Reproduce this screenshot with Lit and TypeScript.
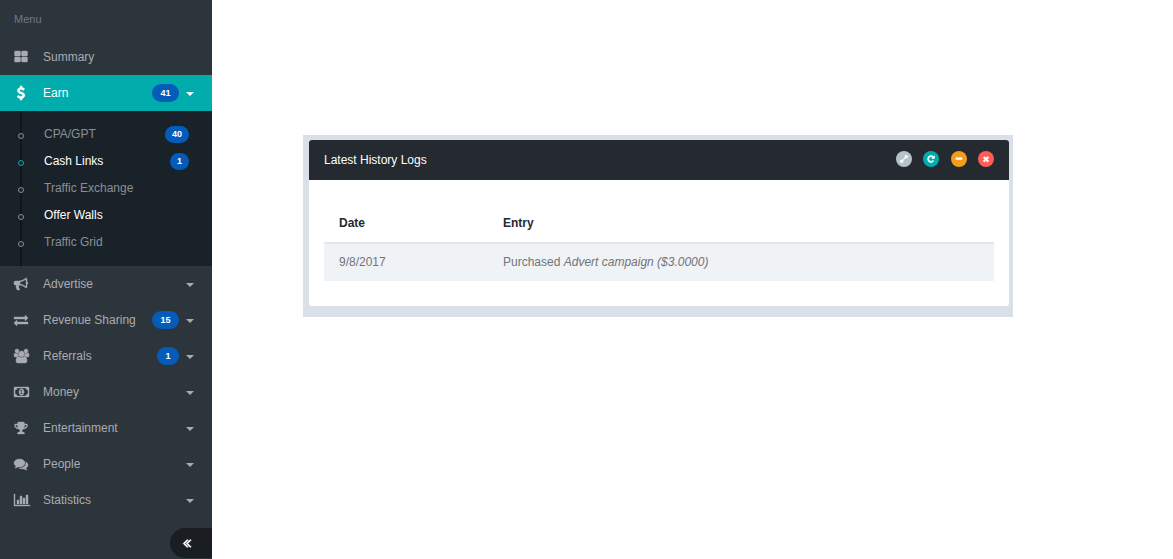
import { LitElement, html, css, svg, nothing } from "lit";
import { customElement, property, state } from "lit/decorators.js";
import { classMap } from "lit/directives/class-map.js";

interface Glyph {
  width: number;
  path: string;
}

const GLYPHS: Record<string, Glyph> = {
  grid: {
    width: 1792,
    path: "M832 1024v384q0 52-38 90t-90 38h-512q-52 0-90-38t-38-90v-384q0-52 38-90t90-38h512q52 0 90 38t38 90zm0-768v384q0 52-38 90t-90 38h-512q-52 0-90-38t-38-90v-384q0-52 38-90t90-38h512q52 0 90 38t38 90zm896 768v384q0 52-38 90t-90 38h-512q-52 0-90-38t-38-90v-384q0-52 38-90t90-38h512q52 0 90 38t38 90zm0-768v384q0 52-38 90t-90 38h-512q-52 0-90-38t-38-90v-384q0-52 38-90t90-38h512q52 0 90 38t38 90z",
  },
  dollar: {
    width: 1792,
    path: "M1362 1185q0 153-99.500 263.500t-258.500 136.500v175q0 14-9 23t-23 9h-135q-13 0-22.500-9.500t-9.500-22.500v-175q-66-9-127.500-31t-101.500-44.500-74-48-46.500-37.500-17.500-18q-17-21-2-41l103-135q7-10 23-12 15-2 24 9l2 2q113 99 243 125 37 8 74 8 81 0 142.500-43t61.500-122q0-28-15-53t-33.500-42-58.500-37.500-66-32-80-32.500q-39-16-61.500-25t-61.500-26.500-62.500-31-56.500-35.500-53.500-42.500-43.500-49-35.500-58-21-66.500-8.500-78q0-138 98-242t255-134v-180q0-13 9.500-22.500t22.500-9.500h135q14 0 23 9t9 23v176q57 6 110.500 23t87 33.500 63.500 37.500 39 29 15 14q17 18 5 38l-81 146q-8 15-23 16-14 3-27-7-3-3-14.500-12t-39-26.500-58.500-32-74.500-26-85.500-11.500q-95 0-155 43t-60 111q0 26 8.500 48t29.500 41.500 39.500 33 56 31 60.500 27 70 27.500q53 20 81 31.500t76 35 75.500 42.500 62 50 53 63.500 31.500 76.500 13 94z",
  },
  bullhorn: {
    width: 1792,
    path: "M1664 640q53 0 90.500 37.500t37.500 90.500-37.500 90.500-90.500 37.500v384q0 52-38 90t-90 38q-417-347-812-380-58 19-91 66t-31 100.500 40 92.500q-20 33-23 65.500t6 58 33.500 55 48 50 61.500 50.500q-29 58-111.500 83t-168.500 11.500-132-55.500q-7-23-29.500-87.500t-32-94.500-23-89-15-101 3.500-98.500 22-110.500h-122q-66 0-113-47t-47-113v-192q0-66 47-113t113-47h480q435 0 896-384 52 0 90 38t38 90v384zm-128 604v-954q-394 302-768 343v270q377 42 768 341z",
  },
  exchange: {
    width: 1792,
    path: "M1792 1184v192q0 13-9.500 22.500t-22.500 9.500h-1376v192q0 13-9.500 22.500t-22.500 9.500q-12 0-24-10l-319-320q-9-9-9-22 0-14 9-23l320-320q9-9 23-9 13 0 22.500 9.500t9.500 22.500v192h1376q13 0 22.500 9.500t9.500 22.500zm0-544q0 14-9 23l-320 320q-9 9-23 9-13 0-22.500-9.500t-9.500-22.500v-192h-1376q-13 0-22.500-9.500t-9.500-22.500v-192q0-13 9.500-22.500t22.500-9.500h1376v-192q0-14 9-23t23-9q12 0 24 10l319 319q9 9 9 23z",
  },
  users: {
    width: 1920,
    path: "M593 896q-162 5-265 128h-134q-82 0-138-40.500t-56-118.500q0-353 124-353 6 0 43.500 21t97.500 42.500 119 21.500q67 0 133-23-5 37-5 66 0 159 93 290zm1071 637q0 120-73 189.500t-194 69.500h-874q-121 0-194-69.500t-73-189.500q0-53 3.500-103.500t14-109 26.500-108.500 43-97.500 62-81 85.500-53.500 111.500-20q10 0 43 21.500t73 48 107 48 135 21.500 135-21.500 107-48 73-48 43-21.500q61 0 111.500 20t85.500 53.500 62 81 43 97.500 26.500 108.500 14 109 3.500 103.500zm-1024-1277q0 106-75 181t-181 75-181-75-75-181 75-181 181-75 181 75 75 181zm704 384q0 159-112.500 271.500t-271.500 112.500-271.500-112.500-112.500-271.500 112.500-271.500 271.500-112.500 271.500 112.500 112.500 271.500zm576 225q0 78-56 118.500t-138 40.500h-134q-103-123-265-128 93-131 93-290 0-29-5-66 66 23 133 23 59 0 119-21.500t97.500-42.500 43.500-21q124 0 124 353zm-128-609q0 106-75 181t-181 75-181-75-75-181 75-181 181-75 181 75 75 181z",
  },
  money: {
    width: 1920,
    path: "M768 1152h384v-96h-128v-448h-114l-148 137 77 80q42-37 55-57h2v288h-128v96zm512-256q0 70-21 142t-59.500 134-101.500 101-138 39-138-39-101.500-101-59.500-134-21-142 21-142 59.500-134 101.500-101 138-39 138 39 101.500 101 59.500 134 21 142zm512 256v-512q-106 0-181-75t-75-181h-1152q0 106-75 181t-181 75v512q106 0 181 75t75 181h1152q0-106 75-181t181-75zm128-832v1152q0 26-19 45t-45 19h-1792q-26 0-45-19t-19-45v-1152q0-26 19-45t45-19h1792q26 0 45 19t19 45z",
  },
  trophy: {
    width: 1792,
    path: "M522 883q-74-162-74-371h-256v96q0 78 94.500 162t235.500 113zm1078-275v-96h-256q0 209-74 371 141-29 235.500-113t94.500-162zm128-128v128q0 71-41.500 143t-112 130-173 97.500-215.500 44.500q-42 54-95 95-38 34-52.500 72.500t-14.500 89.500q0 54 30.500 91t97.500 37q75 0 133.500 45.500t58.500 114.500v64q0 14-9 23t-23 9h-832q-14 0-23-9t-9-23v-64q0-69 58.500-114.500t133.500-45.500q67 0 97.500-37t30.500-91q0-51-14.500-89.500t-52.500-72.500q-53-41-95-95-113-5-215.500-44.500t-173-97.500-112-130-41.500-143v-128q0-40 28-68t68-28h288v-96q0-66 47-113t113-47h576q66 0 113 47t47 113v96h288q40 0 68 28t28 68z",
  },
  comments: {
    width: 1792,
    path: "M1408 768q0 139-94 257t-256.500 186.500-353.500 68.500q-86 0-176-16-124 88-278 128-36 9-86 16h-3q-11 0-20.500-8t-11.500-21q-1-3-1-6.500t.5-6.500 2-6l2.500-5 3.500-5.500 4-5 4.500-5 4-4.500q5-6 23-25t26-29.500 22.500-29 25-38.500 20.500-44q-124-72-195-177t-71-224q0-139 94-257t256.500-186.500 353.500-68.500 353.500 68.500 256.500 186.500 94 257zm384 256q0 120-71 224.500t-195 176.500q10 24 20.500 44t25 38.500 22.500 29 26 29.500 23 25q1 1 4 4.500t4.500 5 4 5 3.500 5.500l2.500 5 2 6 .5 6.500-1 6.500q-3 14-13 22t-22 7q-50-7-86-16-154-40-278-128-90 16-176 16-271 0-472-132 58 4 88 4 161 0 309-45t264-129q125-92 192-212t67-254q0-77-23-152 129 71 204 178t75 230z",
  },
  chart: {
    width: 2048,
    path: "M640 896v512h-256v-512h256zm384-512v1024h-256v-1024h256zm1024 1152v128h-2048v-1536h128v1408h1920zm-640-896v768h-256v-768h256zm384-384v1152h-256v-1152h256z",
  },
  collapse: {
    width: 1792,
    path: "M1011 1376q0 13-10 23l-50 50q-10 10-23 10t-23-10l-466-466q-10-10-10-23t10-23l466-466q10-10 23-10t23 10l50 50q10 10 10 23t-10 23l-393 393 393 393q10 10 10 23zm384 0q0 13-10 23l-50 50q-10 10-23 10t-23-10l-466-466q-10-10-10-23t10-23l466-466q10-10 23-10t23 10l50 50q10 10 10 23t-10 23l-393 393 393 393q10 10 10 23z",
  },
  expand: {
    width: 1792,
    path: "M883 1056q0 13-10 23l-332 332 144 144q19 19 19 45t-19 45-45 19h-448q-26 0-45-19t-19-45v-448q0-26 19-45t45-19 45 19l144 144 332-332q10-10 23-10t23 10l114 114q10 10 10 23zm781-864v448q0 26-19 45t-45 19-45-19l-144-144-332 332q-10 10-23 10t-23-10l-114-114q-10-10-10-23t10-23l332-332-144-144q-19-19-19-45t19-45 45-19h448q26 0 45 19t19 45z",
  },
  repeat: {
    width: 1792,
    path: "M1664 256v448q0 26-19 45t-45 19h-448q-42 0-59-40-17-39 14-69l138-138q-148-137-349-137-104 0-198.500 40.500t-163.500 109.500-109.500 163.500-40.500 198.500 40.500 198.500 109.500 163.500 163.500 109.500 198.500 40.500q119 0 225-52t179-147q7-10 23-12 15 0 25 9l137 138q9 8 9.500 20.500t-7.500 22.500q-109 132-264 204.500t-327 72.500q-156 0-298-61t-245-164-164-245-61-298 61-298 164-245 245-164 298-61q147 0 284.500 55.500t244.500 156.500l130-129q29-31 70-14 39 17 39 59z",
  },
  minus: {
    width: 1792,
    path: "M1600 736v192q0 40-28 68t-68 28h-1216q-40 0-68-28t-28-68v-192q0-40 28-68t68-28h1216q40 0 68 28t28 68z",
  },
  times: {
    width: 1792,
    path: "M1490 1322q0 40-28 68l-136 136q-28 28-68 28t-68-28l-294-294-294 294q-28 28-68 28t-68-28l-136-136q-28-28-28-68t28-68l294-294-294-294q-28-28-28-68t28-68l136-136q28-28 68-28t68 28l294 294 294-294q28-28 68-28t68 28l136 136q28 28 28 68t-28 68l-294 294 294 294q28 28 28 68z",
  },
};

const glyph = (name: string) => {
  const g = GLYPHS[name];
  return html`<svg class="glyph" viewBox="0 0 ${g.width} 1792" aria-hidden="true">
    ${svg`<path d=${g.path}></path>`}
  </svg>`;
};

interface SubItem {
  label: string;
  badge?: number;
  strong?: boolean;
  current?: boolean;
}

interface MenuItem {
  label: string;
  icon: string;
  badge?: number;
  leaf?: boolean;
  children?: SubItem[];
}

const MENU: MenuItem[] = [
  { label: "Summary", icon: "grid", leaf: true },
  {
    label: "Earn",
    icon: "dollar",
    badge: 41,
    children: [
      { label: "CPA/GPT", badge: 40 },
      { label: "Cash Links", badge: 1, strong: true, current: true },
      { label: "Traffic Exchange" },
      { label: "Offer Walls", strong: true },
      { label: "Traffic Grid" },
    ],
  },
  { label: "Advertise", icon: "bullhorn" },
  { label: "Revenue Sharing", icon: "exchange", badge: 15 },
  { label: "Referrals", icon: "users", badge: 1 },
  { label: "Money", icon: "money" },
  { label: "Entertainment", icon: "trophy" },
  { label: "People", icon: "comments" },
  { label: "Statistics", icon: "chart" },
];

@customElement("side-menu")
export class SideMenu extends LitElement {
  @state() private open = "Earn";

  static styles = css`
    :host {
      display: flex;
      flex-direction: column;
      background: #2d353c;
      color: #a8acb1;
      font: 12px/16px "Liberation Sans", Arial, sans-serif;
    }
    ul {
      list-style: none;
      margin: 0;
      padding: 0;
    }
    a {
      color: inherit;
      text-decoration: none;
    }
    .heading {
      margin: 0;
      padding: 12px 14px;
      font-size: 11px;
      line-height: 15px;
      font-weight: 400;
      color: #6e7a84;
    }
    .item {
      display: flex;
      align-items: center;
      height: 36px;
      padding: 0 18px 0 14px;
    }
    .item.active {
      background: #00acac;
      color: #fff;
    }
    .icon {
      display: flex;
      width: 16px;
      height: 14px;
      margin-right: 13px;
    }
    .glyph {
      display: block;
      height: 100%;
      overflow: visible;
      fill: currentColor;
      stroke: currentColor;
      stroke-width: 50;
    }
    .active .glyph {
      stroke-width: 110;
    }
    .label {
      flex: 1;
      white-space: nowrap;
    }
    .badge {
      min-width: 11px;
      padding: 0 8px;
      border-radius: 9px;
      background: #045cb8;
      color: #fff;
      font-size: 9px;
      line-height: 18px;
      font-weight: 700;
      text-align: center;
    }
    .badge.short {
      min-width: 6px;
    }
    .caret {
      margin: 2px 0 0 7px;
      border: 4px solid transparent;
      border-top-color: currentColor;
      border-bottom: 0;
    }
    .sub {
      padding: 10px 0;
      background: linear-gradient(#10171c, #10171c) 20px 0 / 2px 100% no-repeat
        #1a2229;
      color: #889097;
    }
    .subitem {
      display: flex;
      align-items: center;
      height: 27px;
      padding: 0 23px 0 18px;
    }
    .subitem .label {
      padding-bottom: 2px;
    }
    .dot {
      box-sizing: border-box;
      width: 6px;
      height: 6px;
      margin: 2px 20px 0 0;
      border: 1px solid #889097;
      border-radius: 50%;
      background: #1a2229;
    }
    .subitem.current .dot {
      border-color: #00acac;
    }
    .subitem.strong {
      color: #fff;
    }
    .subitem .badge {
      min-width: 10px;
      padding: 0 7px;
      line-height: 17px;
    }
    .subitem .badge.short {
      min-width: 5px;
    }
    .collapse {
      align-self: flex-end;
      width: 42px;
      height: 30px;
      margin-top: 10px;
      padding: 8px 0 8px 10px;
      border: 0;
      border-radius: 15px 0 0 15px;
      background: #1a1d21;
      color: #fff;
    }
    .collapse .glyph {
      height: 14px;
      stroke-width: 110;
    }
  `;

  private toggle(e: Event, item: MenuItem) {
    e.preventDefault();
    this.open = this.open === item.label ? "" : item.label;
  }

  private badge(count?: number) {
    return count
      ? html`<span class=${classMap({ badge: true, short: count < 10 })}>${count}</span>`
      : nothing;
  }

  render() {
    return html`
      <h2 class="heading">Menu</h2>
      <nav>
        <ul>
          ${MENU.map((item) => {
            const open = this.open === item.label;
            return html`<li>
              <a
                href="#"
                class=${classMap({ item: true, active: open })}
                @click=${(e: Event) => this.toggle(e, item)}
              >
                <span class="icon">${glyph(item.icon)}</span>
                <span class="label">${item.label}</span>
                ${this.badge(item.badge)}
                ${item.leaf ? nothing : html`<span class="caret"></span>`}
              </a>
              ${open && item.children
                ? html`<ul class="sub">
                    ${item.children.map(
                      (s) => html`<li>
                        <a
                          href="#"
                          class=${classMap({
                            subitem: true,
                            strong: !!s.strong,
                            current: !!s.current,
                          })}
                        >
                          <span class="dot"></span>
                          <span class="label">${s.label}</span>
                          ${this.badge(s.badge)}
                        </a>
                      </li>`
                    )}
                  </ul>`
                : nothing}
            </li>`;
          })}
        </ul>
      </nav>
      <button class="collapse" type="button" aria-label="Collapse menu">
        ${glyph("collapse")}
      </button>
    `;
  }
}

@customElement("log-panel")
export class LogPanel extends LitElement {
  @property() heading = "";

  static styles = css`
    :host {
      display: block;
      padding: 5px 4px 11px 6px;
      background: #d9e0e7;
      color: #707478;
      font: 12px/17px "Liberation Sans", Arial, sans-serif;
    }
    .panel {
      border-radius: 3px;
      overflow: hidden;
      background: #fff;
    }
    .head {
      display: flex;
      align-items: center;
      justify-content: space-between;
      height: 40px;
      padding: 0 15px;
      background: #242a30;
    }
    .title {
      margin: 0;
      font-size: 12px;
      font-weight: 400;
      color: #fff;
    }
    .tools {
      display: flex;
      justify-content: space-between;
      width: 98px;
      padding-bottom: 2px;
    }
    .tool {
      display: flex;
      align-items: center;
      justify-content: center;
      width: 16px;
      height: 16px;
      padding: 0 0 1px;
      border: 0;
      border-radius: 50%;
      color: #fff;
    }
    .glyph {
      display: block;
      height: 8px;
      overflow: visible;
      fill: currentColor;
      stroke: currentColor;
      stroke-width: 140;
    }
    .expand {
      background: #b6c2c9;
    }
    .repeat {
      background: #00acac;
    }
    .minus {
      background: #f59c1a;
    }
    .times {
      background: #ff5b57;
    }
    .body {
      padding: 25px 15px;
    }
    table {
      width: 100%;
      border-collapse: separate;
      border-spacing: 0;
    }
    th,
    td {
      padding: 10px 15px;
      text-align: left;
    }
    th {
      border-bottom: 2px solid #e2e7eb;
      color: #242a30;
      font-weight: 700;
    }
    .date {
      width: 134px;
    }
    td {
      background: #f0f3f5;
    }
  `;

  render() {
    const tools = [
      ["expand", "Expand"],
      ["repeat", "Reload"],
      ["minus", "Collapse"],
      ["times", "Remove"],
    ];
    return html`
      <section class="panel">
        <header class="head">
          <h4 class="title">${this.heading}</h4>
          <div class="tools">
            ${tools.map(
              ([name, label]) =>
                html`<button type="button" class="tool ${name}" aria-label=${label}>
                  ${glyph(name)}
                </button>`
            )}
          </div>
        </header>
        <div class="body">
          <table>
            <thead>
              <tr>
                <th class="date">Date</th>
                <th>Entry</th>
              </tr>
            </thead>
            <tbody>
              <tr>
                <td>9/8/2017</td>
                <td>Purchased <i>Advert campaign ($3.0000)</i></td>
              </tr>
            </tbody>
          </table>
        </div>
      </section>
    `;
  }
}

@customElement("app-root")
export class AppRoot extends LitElement {
  static styles = css`
    :host {
      display: grid;
      grid-template-columns: 212px 1fr;
      min-height: 100vh;
      background: #fff;
    }
    .content {
      padding: 135px 160px 0 91px;
    }
  `;

  render() {
    return html`
      <side-menu></side-menu>
      <main class="content">
        <log-panel heading="Latest History Logs"></log-panel>
      </main>
    `;
  }
}
